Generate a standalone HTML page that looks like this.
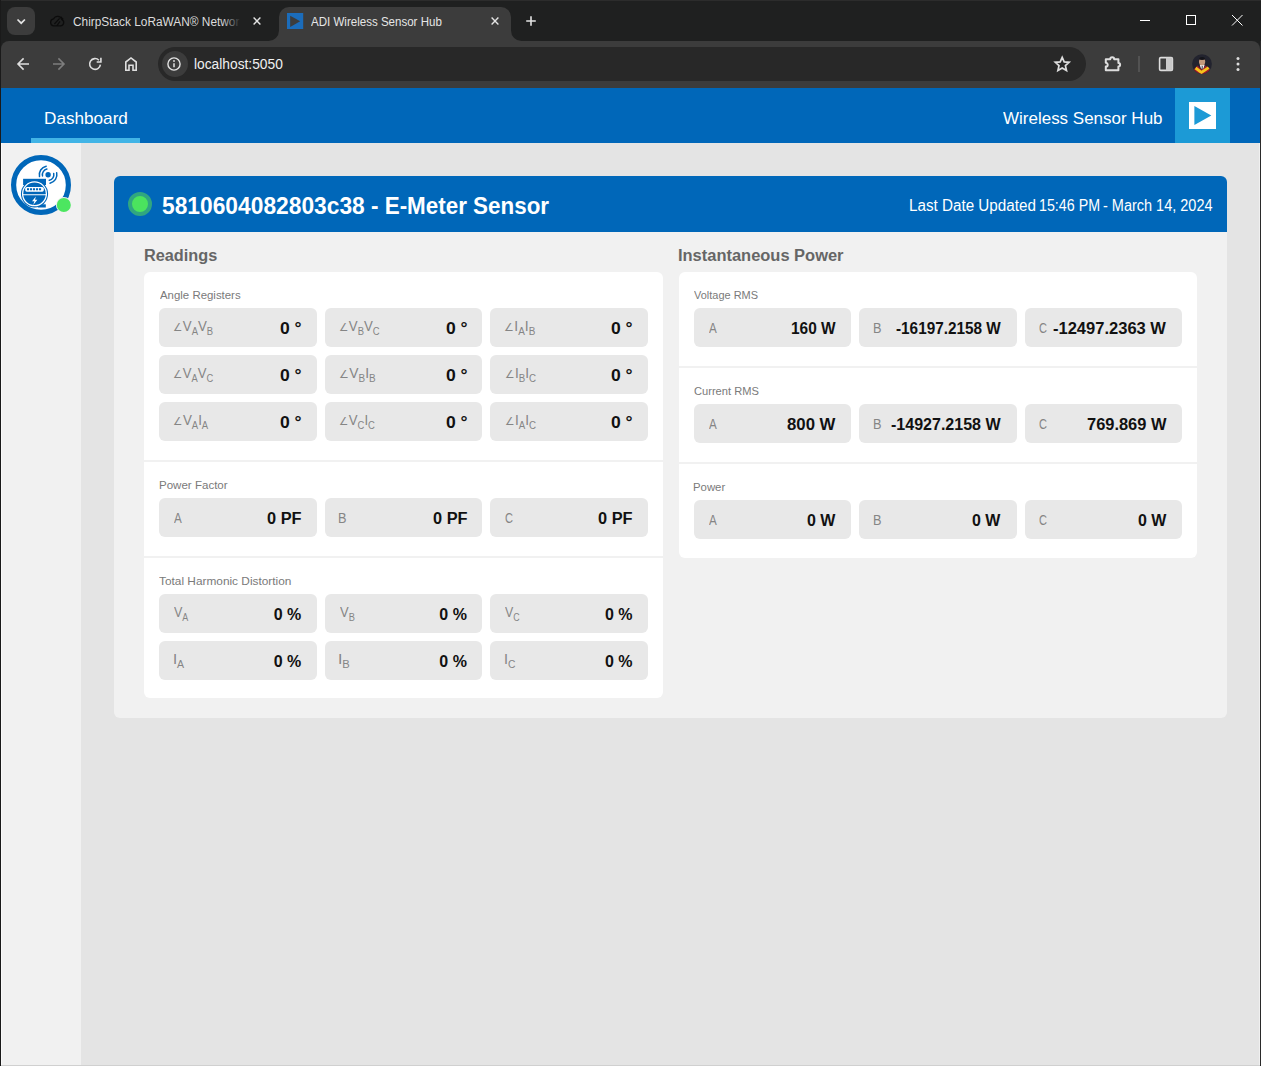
<!DOCTYPE html>
<html lang="en">
<head>
<meta charset="utf-8">
<title>ADI Wireless Sensor Hub</title>
<style>
*{box-sizing:border-box;margin:0;padding:0}
html,body{width:1261px;height:1066px;overflow:hidden;background:#e4e4e4}
body{position:relative;font-family:"Liberation Sans",sans-serif;color:#111}
.abs{position:absolute}

.t{position:absolute;white-space:nowrap;line-height:1;transform-origin:0 0}
.t sub{font-size:10px;vertical-align:baseline;position:relative;top:3.5px;line-height:0}
.t .an{font-family:"DejaVu Sans",sans-serif;font-size:11px;position:relative;top:-0.5px;margin-right:.5px}

/* browser chrome */
#tabbar{left:0;top:0;width:1261px;height:60px;background:#1f2020}
#toolbar{left:1px;top:41px;width:1259px;height:47px;background:#3c3c3c;border-radius:8px 8px 0 0}
#tabsearch{left:7px;top:7px;width:28px;height:28px;background:#3c3c3c;border-radius:8px}

#omni{left:158px;top:47px;width:928px;height:34px;background:#282828;border-radius:17px}
#infoc{left:162px;top:51px;width:26px;height:26px;background:#3c3c3c;border-radius:13px}
/* app */
#hdr{left:1px;top:88px;width:1259px;height:55px;background:#0067b9}
#tabline{left:31px;top:138px;width:109px;height:5px;background:#41b4e6}
#logobox{left:1175px;top:88px;width:55px;height:55px;background:#1c9ad6}
#logosq{left:1189px;top:102px;width:27px;height:27px;background:#fff}
#side{left:1px;top:143px;width:80px;height:923px;background:#f1f1f1}
#edgeL{left:0;top:0;width:1px;height:1066px;background:#1a1a1a}
#edgeB{left:1px;top:1065px;width:1259px;height:1px;background:#d0d0d0}
#edgeR2{left:1259px;top:143px;width:1px;height:922px;background:#f0f0f0}
#edgeL2{left:1px;top:143px;width:1px;height:922px;background:#fafafa}
#edgeR{left:1260px;top:41px;width:1px;height:1025px;background:#2a2a2a}
#card{left:114px;top:176px;width:1113px;height:542px;background:#f1f1f1;border-radius:6px}
#cardh{left:114px;top:176px;width:1113px;height:56px;background:#0067b9;border-radius:6px 6px 0 0}
#dot{left:128px;top:192px;width:24px;height:24px;border-radius:50%;background:#4be35e;border:4px solid #30a680}
.panel{position:absolute;background:#fff;border-radius:6px}
.sep{position:absolute;height:2px;background:#f1f1f1}
.box{position:absolute;height:38.7px;background:#e8e8e8;border-radius:6px}
</style>
</head>
<body>
<!-- browser chrome -->
<div class="abs" id="tabbar"></div>
<div class="abs" id="tabsearch"></div>
<div class="abs" id="toolbar"></div>
<div class="abs" id="omni"></div>
<div class="abs" id="infoc"></div>
<svg class="abs" style="left:0;top:0" width="1261" height="88" viewBox="0 0 1261 88" fill="none">
<!-- active tab shape -->
<path d="M268.5 41 A10.5 10.5 0 0 0 279 30.5 L279 17 A10 10 0 0 1 289 7 L501 7 A10 10 0 0 1 511 17 L511 30.5 A10.5 10.5 0 0 0 521.5 41 Z" fill="#3c3c3c"/>
<rect x="0" y="0" width="1261" height="1" fill="#2c2c2c"/>
<!-- tab search chevron -->
<path d="M17.5 19.5 L21.2 23.2 L24.9 19.5" stroke="#e3e3e3" stroke-width="1.7"/>
<!-- cloud favicon (dark) -->
<path d="M53.3 25.9 H60.6 A3.3 3.3 0 0 0 61.8 19.6 A4.5 4.5 0 0 0 53.5 18.9 A3.6 3.6 0 0 0 53.3 25.9 Z M54.4 24 L59.6 18.4 M56.6 26.2 L60 21.4 M60.6 16.6 L63.2 19.4" stroke="#0c0c0c" stroke-width="1.3"/>
<!-- close x inactive -->
<path d="M253.6 17.6 L260.4 24.4 M260.4 17.6 L253.6 24.4" stroke="#e3e3e3" stroke-width="1.4"/>
<!-- favicon active -->
<rect x="287" y="13" width="16.2" height="16" fill="#1b6cba"/>
<path d="M290.2 15.7 L290.2 26.9 L300.2 21.2 Z" fill="#3c3c3c"/>
<!-- close x active -->
<path d="M491.6 17.6 L498.4 24.4 M498.4 17.6 L491.6 24.4" stroke="#e3e3e3" stroke-width="1.4"/>
<!-- new tab plus -->
<path d="M531 16.2 V25.8 M526.2 21 H535.8" stroke="#e3e3e3" stroke-width="1.6"/>
<!-- window controls -->
<path d="M1140 20.5 H1150" stroke="#fff" stroke-width="1"/>
<rect x="1186.5" y="15.5" width="9" height="9" stroke="#fff" stroke-width="1"/>
<path d="M1232 15 L1242.5 25.5 M1242.5 15 L1232 25.5" stroke="#fff" stroke-width="1"/>
<!-- back -->
<path d="M29 64 H18.2 M23.6 58.4 L18 64 L23.6 69.6" stroke="#dedede" stroke-width="1.6"/>
<!-- forward -->
<path d="M53 64 H63.8 M58.4 58.4 L64 64 L58.4 69.6" stroke="#7d7d7d" stroke-width="1.6"/>
<!-- reload -->
<path d="M100.4 64.6 A5.4 5.4 0 1 1 98.9 60.2" stroke="#dedede" stroke-width="1.6"/>
<path d="M100.9 57.8 V62 H96.7" stroke="#dedede" stroke-width="1.6"/>
<!-- home -->
<path d="M125.8 70.2 V62 L131 57.9 L136.2 62 V70.2 H133 V65.3 H129 V70.2 Z" stroke="#dedede" stroke-width="1.6"/>
<!-- info -->
<circle cx="174" cy="64" r="6.1" stroke="#e3e3e3" stroke-width="1.4"/>
<path d="M174 63.2 V67.3" stroke="#e3e3e3" stroke-width="1.5"/>
<circle cx="174" cy="61" r=".9" fill="#e3e3e3"/>
<!-- star -->
<path d="M1062.2 57.3 L1064.2 61.9 L1069.1 62.3 L1065.4 65.6 L1066.5 70.5 L1062.2 67.9 L1057.9 70.5 L1059 65.6 L1055.3 62.3 L1060.2 61.9 Z" stroke="#dedede" stroke-width="1.7" stroke-linejoin="miter"/>
<!-- extensions puzzle -->
<path d="M1105.8 59.3 H1110.2 A2 2 0 0 1 1114.2 59.3 H1118.4 V63 A1.7 1.7 0 0 1 1118.4 66.4 V70.2 H1105.8 V66.6 A1.9 1.9 0 0 0 1105.8 62.8 Z" stroke="#dedede" stroke-width="2" stroke-linejoin="round"/>
<!-- separator -->
<path d="M1139 56 V72" stroke="#5c5c5c" stroke-width="1.4"/>
<!-- side panel -->
<rect x="1159.6" y="57.6" width="12.8" height="12.8" rx="1.2" stroke="#dedede" stroke-width="1.6"/>
<rect x="1166" y="57.6" width="6.4" height="12.8" fill="#c9c9c9"/>
<!-- avatar -->
<circle cx="1202" cy="64.1" r="9.9" fill="#22232e"/>
<clipPath id="avc"><circle cx="1202" cy="64.1" r="9.9"/></clipPath>
<g clip-path="url(#avc)">
<path d="M1193.8 69.2 L1197.6 65.6 L1201.4 69.6 L1205.6 65.6 L1210.2 68.9 L1208.6 71.6 L1201.4 75.8 L1194.4 71.8 Z" fill="#9c1a28"/>
<path d="M1195.6 68 L1201.4 72.4 L1208.6 67.6" stroke="#f5c31c" stroke-width="2.9" fill="none"/>
<path d="M1199.7 64.8 H1204.7 L1203.6 68 L1202.2 69.6 L1200.8 68 Z" fill="#f4f4f6"/>
<path d="M1202.2 66 V69.4" stroke="#23232b" stroke-width="0.9"/>
<ellipse cx="1202.1" cy="61.8" rx="3.1" ry="3.6" fill="#c59a7c"/>
<path d="M1198.9 61 A3.3 3.8 0 0 1 1205.3 61 L1204.9 59.6 A2.9 2.2 0 0 0 1199.3 59.6 Z" fill="#14141a"/>
<ellipse cx="1202.1" cy="58.6" rx="2.9" ry="1.5" fill="#14141a"/>
</g>
<!-- menu dots -->
<circle cx="1238" cy="58.6" r="1.5" fill="#dedede"/><circle cx="1238" cy="64" r="1.5" fill="#dedede"/><circle cx="1238" cy="69.4" r="1.5" fill="#dedede"/>
</svg>

<!-- app header -->
<div class="abs" id="hdr"></div>
<div class="abs" id="tabline"></div>
<div class="abs" id="logobox"></div>
<div class="abs" id="logosq"></div>
<div class="abs" id="side"></div>
<div class="abs" id="edgeL"></div>
<div class="abs" id="edgeR"></div>
<div class="abs" id="edgeB"></div>
<div class="abs" id="edgeR2"></div>
<div class="abs" id="edgeL2"></div>
<!-- card -->
<div class="abs" id="card"></div>
<div class="abs" id="cardh"></div>
<div class="abs" id="dot"></div>
<div class="panel" style="left:144px;top:272px;width:519px;height:426px"></div>
<div class="sep" style="left:144px;top:460px;width:519px"></div>
<div class="sep" style="left:144px;top:556px;width:519px"></div>
<div class="panel" style="left:679px;top:272px;width:518px;height:286px"></div>
<div class="sep" style="left:679px;top:366px;width:518px"></div>
<div class="sep" style="left:679px;top:462px;width:518px"></div>
<div class="box" style="left:159px;top:308px;width:157.67px"></div><div class="box" style="left:324.67px;top:308px;width:157.67px"></div><div class="box" style="left:490.33px;top:308px;width:157.67px"></div><div class="box" style="left:159px;top:355px;width:157.67px"></div><div class="box" style="left:324.67px;top:355px;width:157.67px"></div><div class="box" style="left:490.33px;top:355px;width:157.67px"></div><div class="box" style="left:159px;top:402px;width:157.67px"></div><div class="box" style="left:324.67px;top:402px;width:157.67px"></div><div class="box" style="left:490.33px;top:402px;width:157.67px"></div><div class="box" style="left:159px;top:498px;width:157.67px"></div><div class="box" style="left:324.67px;top:498px;width:157.67px"></div><div class="box" style="left:490.33px;top:498px;width:157.67px"></div><div class="box" style="left:159px;top:594px;width:157.67px"></div><div class="box" style="left:159px;top:641px;width:157.67px"></div><div class="box" style="left:324.67px;top:594px;width:157.67px"></div><div class="box" style="left:324.67px;top:641px;width:157.67px"></div><div class="box" style="left:490.33px;top:594px;width:157.67px"></div><div class="box" style="left:490.33px;top:641px;width:157.67px"></div><div class="box" style="left:694px;top:308px;width:157.33px"></div><div class="box" style="left:859.33px;top:308px;width:157.33px"></div><div class="box" style="left:1024.67px;top:308px;width:157.33px"></div><div class="box" style="left:694px;top:404px;width:157.33px"></div><div class="box" style="left:859.33px;top:404px;width:157.33px"></div><div class="box" style="left:1024.67px;top:404px;width:157.33px"></div><div class="box" style="left:694px;top:500px;width:157.33px"></div><div class="box" style="left:859.33px;top:500px;width:157.33px"></div><div class="box" style="left:1024.67px;top:500px;width:157.33px"></div>
<div class="abs" style="left:222px;top:10px;width:22px;height:24px;background:linear-gradient(90deg,rgba(31,32,32,0),#1f2020 85%);z-index:5"></div>
<!-- logo triangle -->
<svg class="abs" style="left:1189px;top:102px" width="27" height="27" viewBox="0 0 27 27"><path d="M5.4 4.1 L5.4 23.1 L22.3 13.6 Z" fill="#1c9ad6"/></svg>
<!-- sidebar sensor icon -->
<svg class="abs" style="left:0;top:145px" width="90" height="80" viewBox="0 145 90 80" fill="none">
<circle cx="41" cy="185" r="27.4" fill="#fff" stroke="#0067b9" stroke-width="5.2"/>
<clipPath id="sc"><circle cx="41" cy="185" r="24.8"/></clipPath>
<g clip-path="url(#sc)">
<!-- meter top cap -->
<rect x="23.1" y="178.8" width="22.9" height="6.2" fill="#0067b9"/>
<!-- feet -->
<rect x="38" y="204.3" width="7.8" height="3.2" fill="#0067b9"/>
<!-- meter body -->
<circle cx="34.5" cy="193.8" r="13.6" fill="#0067b9"/>
<circle cx="34.5" cy="193.8" r="11.9" stroke="#fff" stroke-width="1.3"/>
<!-- display -->
<rect x="25.2" y="187" width="18.6" height="4.7" rx="1.6" fill="#fff"/>
<path d="M27 189.35 H42" stroke="#0067b9" stroke-width="2" stroke-dasharray="2.1 0.9"/>
<!-- bowl -->
<path d="M22.5 194.8 H46.5" stroke="#fff" stroke-width="1.1"/>
<!-- bolt -->
<path d="M35.9 196.4 L32 201.2 H34.4 L33.2 205 L37.4 199.8 H35 Z" fill="#fff"/>
</g>
<!-- signal -->
<circle cx="48.1" cy="174.7" r="2.7" fill="#0067b9"/>
<g stroke="#0067b9" stroke-width="1.5" stroke-linecap="round">
<path d="M46.9 169.1 A5.7 5.7 0 0 0 42.5 175.9"/>
<path d="M46.2 166.2 A8.7 8.7 0 0 0 39.5 176.6"/>
<path d="M53.7 173.5 A5.7 5.7 0 0 1 49.3 180.3"/>
<path d="M56.7 172.8 A8.7 8.7 0 0 1 50 183.2"/>
</g>
<!-- status dot -->
<circle cx="63.8" cy="205" r="7.9" fill="#f1f1f1"/>
<circle cx="63.8" cy="205" r="7" fill="#4ce660"/>
</svg>

<span class="t" style="left:43.54px;top:109.00px;font:normal 17px 'Liberation Sans',sans-serif;color:#fff;transform:scaleX(1.0087);">Dashboard</span>
<span class="t" style="left:1002.80px;top:109.00px;font:normal 17px 'Liberation Sans',sans-serif;color:#fff;transform:scaleX(0.9991);">Wireless Sensor Hub</span>
<span class="t" style="left:162.34px;top:191.90px;font:bold 24px 'Liberation Sans',sans-serif;color:#fff;transform:scaleX(0.9495);">5810604082803c38</span>
<span class="t" style="left:371.42px;top:191.90px;font:bold 24px 'Liberation Sans',sans-serif;color:#fff;transform:scaleX(0.9337);">- E-Meter Sensor</span>
<span class="t" style="left:909.16px;top:196.90px;font:normal 16px 'Liberation Sans',sans-serif;color:#fff;transform:scaleX(0.9511);">Last Date Updated</span>
<span class="t" style="left:1038.74px;top:196.90px;font:normal 16px 'Liberation Sans',sans-serif;color:#fff;transform:scaleX(0.8909);">15:46 PM</span>
<span class="t" style="left:1103.37px;top:196.90px;font:normal 16px 'Liberation Sans',sans-serif;color:#fff;transform:scaleX(0.9052);">- March 14, 2024</span>
<span class="t" style="left:144.13px;top:246.60px;font:bold 16px 'Liberation Sans',sans-serif;color:#666;transform:scaleX(1.0178);">Readings</span>
<span class="t" style="left:678.42px;top:246.80px;font:bold 16px 'Liberation Sans',sans-serif;color:#666;transform:scaleX(1.0285);">Instantaneous Power</span>
<span class="t" style="left:159.75px;top:289.00px;font:normal 11.5px 'Liberation Sans',sans-serif;color:#7a7a7a;transform:scaleX(0.9932);">Angle Registers</span>
<span class="t" style="left:158.75px;top:479.00px;font:normal 11.5px 'Liberation Sans',sans-serif;color:#7a7a7a;transform:scaleX(1.0037);">Power Factor</span>
<span class="t" style="left:159.49px;top:575.00px;font:normal 11.5px 'Liberation Sans',sans-serif;color:#7a7a7a;transform:scaleX(1.0306);">Total Harmonic Distortion</span>
<span class="t" style="left:693.81px;top:289.00px;font:normal 11.5px 'Liberation Sans',sans-serif;color:#7a7a7a;transform:scaleX(0.9540);">Voltage RMS</span>
<span class="t" style="left:693.57px;top:385.00px;font:normal 11.5px 'Liberation Sans',sans-serif;color:#7a7a7a;transform:scaleX(0.9667);">Current RMS</span>
<span class="t" style="left:693.06px;top:481.00px;font:normal 11.5px 'Liberation Sans',sans-serif;color:#7a7a7a;transform:scaleX(0.9873);">Power</span>
<span class="t" style="left:173.20px;top:318.40px;font:normal 14px 'Liberation Sans',sans-serif;color:#858585;transform:scaleX(0.9463);"><span class="an">∠</span>V<sub>A</sub>V<sub>B</sub></span>
<span class="t" style="left:280.10px;top:319.80px;font:bold 16px 'Liberation Sans',sans-serif;color:#111;transform:scaleX(1.0959);">0 °</span>
<span class="t" style="left:338.88px;top:318.40px;font:normal 14px 'Liberation Sans',sans-serif;color:#858585;transform:scaleX(0.9446);"><span class="an">∠</span>V<sub>B</sub>V<sub>C</sub></span>
<span class="t" style="left:445.77px;top:319.80px;font:bold 16px 'Liberation Sans',sans-serif;color:#111;transform:scaleX(1.0959);">0 °</span>
<span class="t" style="left:504.49px;top:318.40px;font:normal 14px 'Liberation Sans',sans-serif;color:#858585;transform:scaleX(0.9933);"><span class="an">∠</span>I<sub>A</sub>I<sub>B</sub></span>
<span class="t" style="left:611.43px;top:319.80px;font:bold 16px 'Liberation Sans',sans-serif;color:#111;transform:scaleX(1.0959);">0 °</span>
<span class="t" style="left:173.22px;top:365.40px;font:normal 14px 'Liberation Sans',sans-serif;color:#858585;transform:scaleX(0.9349);"><span class="an">∠</span>V<sub>A</sub>V<sub>C</sub></span>
<span class="t" style="left:280.10px;top:366.80px;font:bold 16px 'Liberation Sans',sans-serif;color:#111;transform:scaleX(1.0959);">0 °</span>
<span class="t" style="left:338.83px;top:365.40px;font:normal 14px 'Liberation Sans',sans-serif;color:#858585;transform:scaleX(0.9915);"><span class="an">∠</span>V<sub>B</sub>I<sub>B</sub></span>
<span class="t" style="left:445.77px;top:366.80px;font:bold 16px 'Liberation Sans',sans-serif;color:#111;transform:scaleX(1.0959);">0 °</span>
<span class="t" style="left:504.51px;top:365.40px;font:normal 14px 'Liberation Sans',sans-serif;color:#858585;transform:scaleX(0.9691);"><span class="an">∠</span>I<sub>B</sub>I<sub>C</sub></span>
<span class="t" style="left:611.43px;top:366.80px;font:bold 16px 'Liberation Sans',sans-serif;color:#111;transform:scaleX(1.0959);">0 °</span>
<span class="t" style="left:173.20px;top:412.40px;font:normal 14px 'Liberation Sans',sans-serif;color:#858585;transform:scaleX(0.9528);"><span class="an">∠</span>V<sub>A</sub>I<sub>A</sub></span>
<span class="t" style="left:280.10px;top:413.80px;font:bold 16px 'Liberation Sans',sans-serif;color:#111;transform:scaleX(1.0959);">0 °</span>
<span class="t" style="left:338.88px;top:412.40px;font:normal 14px 'Liberation Sans',sans-serif;color:#858585;transform:scaleX(0.9415);"><span class="an">∠</span>V<sub>C</sub>I<sub>C</sub></span>
<span class="t" style="left:445.77px;top:413.80px;font:bold 16px 'Liberation Sans',sans-serif;color:#111;transform:scaleX(1.0959);">0 °</span>
<span class="t" style="left:504.51px;top:412.40px;font:normal 14px 'Liberation Sans',sans-serif;color:#858585;transform:scaleX(0.9691);"><span class="an">∠</span>I<sub>A</sub>I<sub>C</sub></span>
<span class="t" style="left:611.43px;top:413.80px;font:bold 16px 'Liberation Sans',sans-serif;color:#111;transform:scaleX(1.0959);">0 °</span>
<span class="t" style="left:173.95px;top:510.00px;font:normal 14px 'Liberation Sans',sans-serif;color:#858585;transform:scaleX(0.8324);">A</span>
<span class="t" style="left:266.95px;top:509.80px;font:bold 16px 'Liberation Sans',sans-serif;color:#111;transform:scaleX(1.0215);">0 PF</span>
<span class="t" style="left:338.48px;top:510.00px;font:normal 14px 'Liberation Sans',sans-serif;color:#858585;transform:scaleX(0.9103);">B</span>
<span class="t" style="left:432.62px;top:509.80px;font:bold 16px 'Liberation Sans',sans-serif;color:#111;transform:scaleX(1.0215);">0 PF</span>
<span class="t" style="left:504.69px;top:510.00px;font:normal 14px 'Liberation Sans',sans-serif;color:#858585;transform:scaleX(0.7886);">C</span>
<span class="t" style="left:598.28px;top:509.80px;font:bold 16px 'Liberation Sans',sans-serif;color:#111;transform:scaleX(1.0215);">0 PF</span>
<span class="t" style="left:173.93px;top:604.40px;font:normal 14px 'Liberation Sans',sans-serif;color:#858585;transform:scaleX(0.8952);">V<sub>A</sub></span>
<span class="t" style="left:273.67px;top:605.80px;font:bold 16px 'Liberation Sans',sans-serif;color:#111;transform:scaleX(1.0000);">0 %</span>
<span class="t" style="left:172.83px;top:651.40px;font:normal 14px 'Liberation Sans',sans-serif;color:#858585;transform:scaleX(1.0595);">I<sub>A</sub></span>
<span class="t" style="left:273.67px;top:652.80px;font:bold 16px 'Liberation Sans',sans-serif;color:#111;transform:scaleX(1.0000);">0 %</span>
<span class="t" style="left:339.59px;top:604.40px;font:normal 14px 'Liberation Sans',sans-serif;color:#858585;transform:scaleX(0.9246);">V<sub>B</sub></span>
<span class="t" style="left:439.34px;top:605.80px;font:bold 16px 'Liberation Sans',sans-serif;color:#111;transform:scaleX(1.0000);">0 %</span>
<span class="t" style="left:338.42px;top:651.40px;font:normal 14px 'Liberation Sans',sans-serif;color:#858585;transform:scaleX(1.1200);">I<sub>B</sub></span>
<span class="t" style="left:439.34px;top:652.80px;font:bold 16px 'Liberation Sans',sans-serif;color:#111;transform:scaleX(1.0000);">0 %</span>
<span class="t" style="left:505.26px;top:604.40px;font:normal 14px 'Liberation Sans',sans-serif;color:#858585;transform:scaleX(0.8812);">V<sub>C</sub></span>
<span class="t" style="left:605.00px;top:605.80px;font:bold 16px 'Liberation Sans',sans-serif;color:#111;transform:scaleX(1.0000);">0 %</span>
<span class="t" style="left:504.19px;top:651.40px;font:normal 14px 'Liberation Sans',sans-serif;color:#858585;transform:scaleX(1.0316);">I<sub>C</sub></span>
<span class="t" style="left:605.00px;top:652.80px;font:bold 16px 'Liberation Sans',sans-serif;color:#111;transform:scaleX(1.0000);">0 %</span>
<span class="t" style="left:708.95px;top:320.00px;font:normal 14px 'Liberation Sans',sans-serif;color:#858585;transform:scaleX(0.8324);">A</span>
<span class="t" style="left:791.02px;top:319.80px;font:bold 16px 'Liberation Sans',sans-serif;color:#111;transform:scaleX(0.9635);">160 W</span>
<span class="t" style="left:873.14px;top:320.00px;font:normal 14px 'Liberation Sans',sans-serif;color:#858585;transform:scaleX(0.9103);">B</span>
<span class="t" style="left:896.13px;top:319.80px;font:bold 16px 'Liberation Sans',sans-serif;color:#111;transform:scaleX(0.9569);">-16197.2158 W</span>
<span class="t" style="left:1039.03px;top:320.00px;font:normal 14px 'Liberation Sans',sans-serif;color:#858585;transform:scaleX(0.7886);">C</span>
<span class="t" style="left:1053.23px;top:319.80px;font:bold 16px 'Liberation Sans',sans-serif;color:#111;transform:scaleX(1.0321);">-12497.2363 W</span>
<span class="t" style="left:708.95px;top:416.00px;font:normal 14px 'Liberation Sans',sans-serif;color:#858585;transform:scaleX(0.8324);">A</span>
<span class="t" style="left:787.16px;top:415.80px;font:bold 16px 'Liberation Sans',sans-serif;color:#111;transform:scaleX(1.0470);">800 W</span>
<span class="t" style="left:873.14px;top:416.00px;font:normal 14px 'Liberation Sans',sans-serif;color:#858585;transform:scaleX(0.9103);">B</span>
<span class="t" style="left:891.21px;top:415.80px;font:bold 16px 'Liberation Sans',sans-serif;color:#111;transform:scaleX(1.0018);">-14927.2158 W</span>
<span class="t" style="left:1039.03px;top:416.00px;font:normal 14px 'Liberation Sans',sans-serif;color:#858585;transform:scaleX(0.7886);">C</span>
<span class="t" style="left:1086.68px;top:415.80px;font:bold 16px 'Liberation Sans',sans-serif;color:#111;transform:scaleX(1.0267);">769.869 W</span>
<span class="t" style="left:708.95px;top:512.00px;font:normal 14px 'Liberation Sans',sans-serif;color:#858585;transform:scaleX(0.8324);">A</span>
<span class="t" style="left:807.13px;top:511.80px;font:bold 16px 'Liberation Sans',sans-serif;color:#111;transform:scaleX(0.9982);">0 W</span>
<span class="t" style="left:873.14px;top:512.00px;font:normal 14px 'Liberation Sans',sans-serif;color:#858585;transform:scaleX(0.9103);">B</span>
<span class="t" style="left:972.46px;top:511.80px;font:bold 16px 'Liberation Sans',sans-serif;color:#111;transform:scaleX(0.9982);">0 W</span>
<span class="t" style="left:1039.03px;top:512.00px;font:normal 14px 'Liberation Sans',sans-serif;color:#858585;transform:scaleX(0.7886);">C</span>
<span class="t" style="left:1137.80px;top:511.80px;font:bold 16px 'Liberation Sans',sans-serif;color:#111;transform:scaleX(0.9982);">0 W</span>
<span class="t" style="left:72.76px;top:14.80px;font:normal 12px 'Liberation Sans',sans-serif;color:#dcdcdc;transform:scaleX(0.9878);">ChirpStack LoRaWAN® Networ</span>
<span class="t" style="left:310.95px;top:14.70px;font:normal 12px 'Liberation Sans',sans-serif;color:#e6e6e6;transform:scaleX(0.9616);">ADI Wireless Sensor Hub</span>
<span class="t" style="left:193.57px;top:56.00px;font:normal 14px 'Liberation Sans',sans-serif;color:#f0f0f0;transform:scaleX(0.9837);">localhost:5050</span>
</body>
</html>
